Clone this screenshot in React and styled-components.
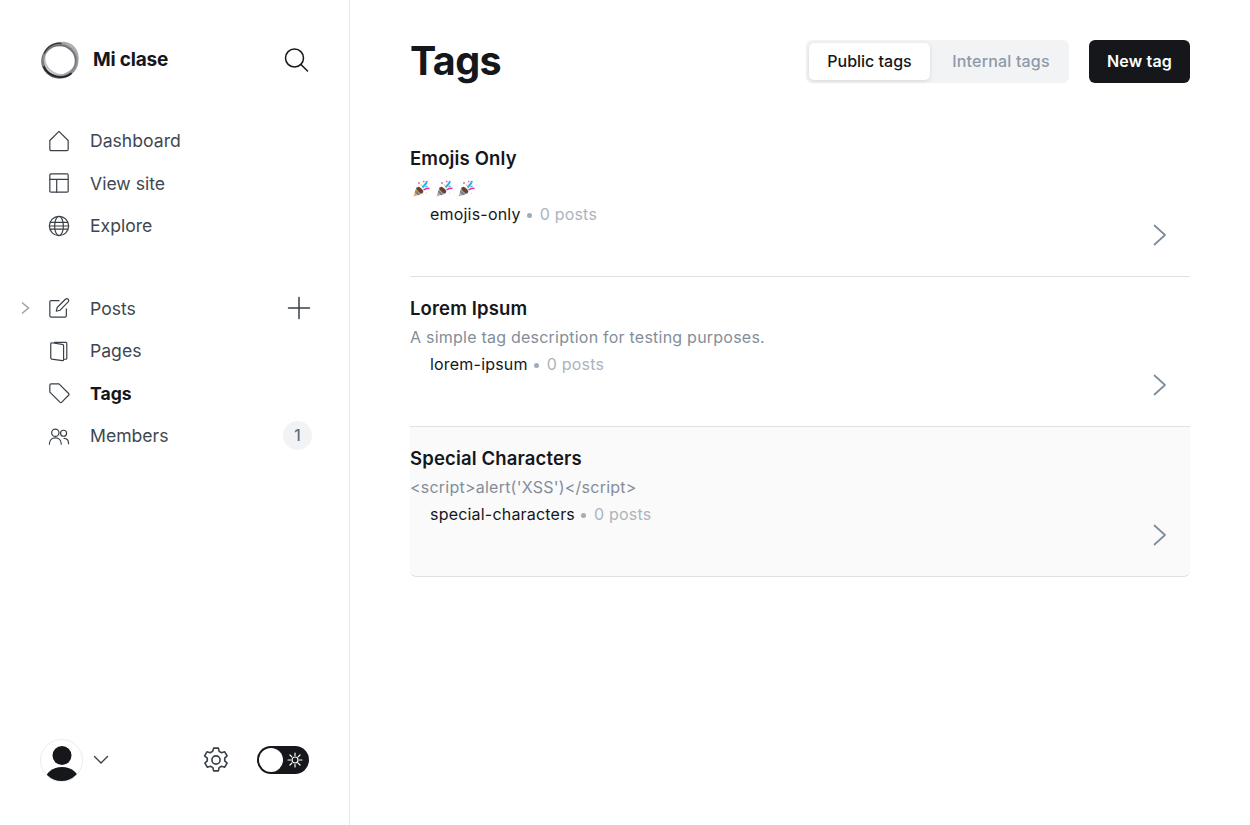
import React from "react";
import styled, { createGlobalStyle } from "styled-components";

const Global = createGlobalStyle`
  html, body { margin: 0; padding: 0; background: #fff; }
  body { font-family: Inter, "Liberation Sans", sans-serif; color: #15171a; }
  * { box-sizing: border-box; }
`;

const Shell = styled.div`
  display: flex;
  width: 1250px;
  height: 825px;
  overflow: hidden;
`;
const Sidebar = styled.aside`
  width: 350px;
  flex: none;
  height: 825px;
  border-right: 1px solid #e6e9eb;
  display: flex;
  flex-direction: column;
  padding: 40px 38px 44px 40px;
`;
const Brand = styled.div`
  display: flex;
  align-items: center;
  height: 40px;
  margin-bottom: 39.7px;
`;
const BrandName = styled.div`
  font-size: 19px;
  line-height: 38px;
  height: 38px;
  font-weight: 700;
  letter-spacing: -0.2px;
  margin-left: 13px;
  margin-top: -1px;
  flex: 1;
  color: #15171a;
`;
const SearchIcon = styled.span`
  display: flex;
  margin-right: 2px;
`;
const NavGroup = styled.nav`
  display: flex;
  flex-direction: column;
  margin-bottom: 40px;
`;
const NavRow = styled.div`
  position: relative;
  display: flex;
  align-items: center;
  height: 42.5px;
  padding-left: 8px;
  gap: 20px;
  font-size: 17.6px;
  font-weight: ${p => (p.$active ? 700 : 400)};
  color: ${p => (p.$active ? "#15171a" : "#3e4751")};
`;
const NavIcon = styled.span`
  width: 22px;
  height: 22px;
  flex: none;
  display: flex;
  color: #394047;
`;
const NavLabel = styled.span`
  flex: 1;
`;
const Caret = styled.span`
  position: absolute;
  left: -21px;
  top: 15px;
  display: flex;
  color: #9aa3ab;
`;
const PlusIcon = styled.span`
  display: flex;
  color: #394047;
`;
const Badge = styled.span`
  width: 29px;
  height: 29px;
  margin-right: -1px;
  border-radius: 50%;
  background: #f1f3f4;
  color: #5d6d85;
  font-size: 15.5px;
  font-weight: 500;
  display: flex;
  align-items: center;
  justify-content: center;
`;
const Footer = styled.div`
  margin-top: auto;
  display: flex;
  align-items: center;
  height: 42px;
`;
const Avatar = styled.div`
  width: 43px;
  height: 43px;
  border-radius: 50%;
  border: 1px solid #e9ebed;
  overflow: hidden;
  flex: none;
`;
const Chevron = styled.span`
  display: flex;
  margin-left: 10px;
  color: #394047;
`;
const Gear = styled.span`
  display: flex;
  margin-left: auto;
  margin-right: 27px;
  color: #394047;
`;
const Toggle = styled.div`
  width: 52px;
  height: 28px;
  margin-right: 2px;
  border-radius: 14px;
  background: #15171a;
  display: flex;
  align-items: center;
  justify-content: space-between;
  padding: 0 6px 0 2px;
`;
const Knob = styled.span`
  width: 24px;
  height: 24px;
  border-radius: 50%;
  background: #fff;
`;
const SunWrap = styled.span`
  display: flex;
  color: #fff;
`;
const Main = styled.main`
  flex: 1;
  padding: 40px 60px 0;
`;
const Header = styled.header`
  display: flex;
  align-items: center;
  height: 43px;
  margin-bottom: 44px;
`;
const Title = styled.h1`
  margin: 0;
  flex: 1;
  font-size: 39.5px;
  line-height: 42px;
  height: 43px;
  font-weight: 700;
  letter-spacing: -0.6px;
  color: #15171a;
`;
const Segments = styled.div`
  display: flex;
  height: 43px;
  padding: 3px;
  border-radius: 6px;
  background: #f1f3f4;
  margin-right: 20px;
`;
const Segment = styled.div`
  width: ${p => p.$w}px;
  display: flex;
  align-items: center;
  justify-content: center;
  padding-bottom: 1px;
  border-radius: 5px;
  font-size: 16px;
  font-weight: 500;
  letter-spacing: ${p => (p.$on ? 0 : "0.17px")};
  padding-left: ${p => (p.$on ? 0 : "6px")};
  background: ${p => (p.$on ? "#fff" : "transparent")};
  color: ${p => (p.$on ? "#15171a" : "#8e9aa8")};
  box-shadow: ${p => (p.$on ? "0 1px 4px rgba(0,0,0,.12)" : "none")};
`;
const Primary = styled.div`
  width: 101px;
  height: 43px;
  padding-bottom: 1px;
  border-radius: 6px;
  background: #15171a;
  color: #fff;
  font-size: 16px;
  letter-spacing: 0.2px;
  font-weight: 600;
  display: flex;
  align-items: center;
  justify-content: center;
`;
const List = styled.div`
  display: flex;
  flex-direction: column;
`;
const Row = styled.div`
  position: relative;
  height: 150px;
  padding-top: 19px;
  border-bottom: 1px solid #dfe2e5;
  background: ${p => (p.$hover ? "#fafafa" : "transparent")};
  border-radius: ${p => (p.$hover ? "0 0 6px 6px" : "0")};
`;
const RowTitle = styled.div`
  font-size: 18.5px;
  line-height: 24px;
  font-weight: 600;
  letter-spacing: 0.15px;
  color: #15171a;
`;
const RowDesc = styled.div`
  display: flex;
  align-items: center;
  height: 29px;
  margin-top: 2px;
  font-size: 16px;
  letter-spacing: 0.23px;
  color: #838e9a;
`;
const EmojiRow = styled.div`
  display: flex;
  gap: 5.5px;
  padding-left: 3px;
  margin-top: 3px;
`;
const RowMeta = styled.div`
  display: flex;
  align-items: center;
  padding-left: 20px;
  height: 24px;
  margin-top: 1px;
  font-size: 16px;
  letter-spacing: 0.2px;
  color: #15171a;
`;
const Dot = styled.span`
  width: 5px;
  height: 5px;
  border-radius: 50%;
  background: #a0acb8;
  margin: 2px 8px 0 6px;
`;
const Count = styled.span`
  color: #abb4be;
`;
const RowArrow = styled.span`
  position: absolute;
  right: 19px;
  top: 97px;
  display: flex;
  color: #7c8b9a;
`;

const Ic = ({ s = 22, w = 1.3, vb = 24, children }) => (
  <svg width={s} height={s} viewBox={`0 0 ${vb} ${vb}`} fill="none" stroke="currentColor" strokeWidth={w} strokeLinecap="round" strokeLinejoin="round">
    {children}
  </svg>
);

const Logo = () => (
  <svg width="40" height="40" viewBox="0 0 40 40" fill="none">
    <ellipse cx="19.500" cy="21" rx="16.800" ry="16.200" stroke="#55575a" strokeWidth="3" opacity=".85" />
    <ellipse cx="20.500" cy="19.500" rx="18" ry="15.800" stroke="#808285" strokeWidth="2.200" opacity=".65" transform="rotate(-35 20 20)" />
    <ellipse cx="20.500" cy="19" rx="17" ry="15.500" stroke="#a0a2a5" strokeWidth="2.200" opacity=".65" transform="rotate(30 20 20)" />
    <path d="M4 27C8.500 36.500 22 40.500 31 33.500" stroke="#232528" strokeWidth="1.900" strokeLinecap="round" />
    <path d="M4.500 13C7.500 6 15 2.500 21 3.500" stroke="#3a3c3f" strokeWidth="1.500" strokeLinecap="round" />
  </svg>
);

const Popper = () => (
  <svg width="17" height="17" viewBox="0 0 17 17" fill="none">
    <path d="M0.500 16.500L3.500 7L10 13.500Z" fill="#e8a93f" />
    <path d="M2.600 10L7 14.500L5 15.200L1.900 12.200Z" fill="#5c7fc4" />
    <path d="M3.300 7.800L8.800 13L7.500 13.800L2.900 9Z" fill="#5c7fc4" />
    <ellipse cx="7" cy="10" rx="2" ry="4" transform="rotate(-45 7 10)" fill="#6b4230" />
    <path d="M10 1.500H11.500M5 3H7" stroke="#f25fb0" strokeWidth="1.600" />
    <path d="M9.500 7.500L13 3.500L14 1" stroke="#25b4ee" strokeWidth="2" />
    <path d="M10.500 10C12.500 8.500 14.500 8 16.500 8.500" stroke="#ee2a9a" strokeWidth="1.500" />
    <path d="M12.500 7L14.500 6" stroke="#25b4ee" strokeWidth="1.200" />
    <path d="M8 4L8.500 6M13 13L14 13.500M9.500 2.500V3" stroke="#f2d16e" strokeWidth="1" />
  </svg>
);

const rows = [
  { title: "Emojis Only", emoji: true, slug: "emojis-only" },
  { title: "Lorem Ipsum", desc: "A simple tag description for testing purposes.", slug: "lorem-ipsum" },
  { title: "Special Characters", desc: "<script>alert('XSS')</script>", slug: "special-characters", hover: true },
];

export default function App() {
  return (
    <Shell>
      <Global />
      <Sidebar>
        <Brand>
          <Logo />
          <BrandName>Mi clase</BrandName>
          <SearchIcon>
            <Ic s={26} w={1.500} vb={26}>
              <circle cx="11.500" cy="11" r="9" />
              <path d="M18 17.500l6.500 6.500" />
            </Ic>
          </SearchIcon>
        </Brand>
        <NavGroup>
          <NavRow>
            <NavIcon><Ic><path d="M2 11.500L12 1.500l10 10v9.500a1.500 1.500 0 0 1-1.500 1.500h-17A1.500 1.500 0 0 1 2 21z" /></Ic></NavIcon>
            <NavLabel>Dashboard</NavLabel>
          </NavRow>
          <NavRow>
            <NavIcon><Ic><rect x="2" y="2" width="20" height="20" rx="1.200" /><path d="M2 8h20M9.500 8v14" /></Ic></NavIcon>
            <NavLabel>View site</NavLabel>
          </NavRow>
          <NavRow>
            <NavIcon><Ic><circle cx="12" cy="12" r="10.500" /><ellipse cx="12" cy="12" rx="4.800" ry="10.500" /><path d="M2.500 8h19M2.500 15.500h19M1.500 12h21" /></Ic></NavIcon>
            <NavLabel>Explore</NavLabel>
          </NavRow>
        </NavGroup>
        <NavGroup>
          <NavRow>
            <Caret><Ic s={12} w={1.600} vb={12}><path d="M3.500 1l6 5-6 5" /></Ic></Caret>
            <NavIcon><Ic><path d="M12 4H3.500A1.500 1.500 0 0 0 2 5.500v15A1.500 1.500 0 0 0 3.500 22h15a1.500 1.500 0 0 0 1.500-1.500V13" /><path d="M19 2.500a2 2 0 0 1 3 2.800L13 14.500l-4 1 1-4z" /></Ic></NavIcon>
            <NavLabel>Posts</NavLabel>
            <PlusIcon><Ic s={24} w={1.500} vb={24}><path d="M12 1.500v21M1.500 12h21" /></Ic></PlusIcon>
          </NavRow>
          <NavRow>
            <NavIcon><Ic><path d="M7 2.500h12.500a1 1 0 0 1 1 1V20a1 1 0 0 1-1 1H17" /><path d="M4 3l11.500 1.800a1.500 1.500 0 0 1 1.500 1.500V21.500a1 1 0 0 1-1.200 1L4 20.800A1.500 1.500 0 0 1 3 19.500V4a1 1 0 0 1 1-1z" /></Ic></NavIcon>
            <NavLabel>Pages</NavLabel>
          </NavRow>
          <NavRow $active>
            <NavIcon><Ic><path d="M2 3.500A1.500 1.500 0 0 1 3.500 2H12l10.500 10.500a1.500 1.500 0 0 1 0 2L15 22a1.500 1.500 0 0 1-2 0L2 11z" /></Ic></NavIcon>
            <NavLabel>Tags</NavLabel>
          </NavRow>
          <NavRow>
            <NavIcon><Ic><circle cx="8" cy="8.500" r="4" /><path d="M1.500 21c0-4 2.500-7 6.500-7s6.500 3 6.500 7" /><circle cx="17" cy="9" r="3.300" /><path d="M17.500 14.500c3 0 5 2.500 5 6" /></Ic></NavIcon>
            <NavLabel>Members</NavLabel>
            <Badge>1</Badge>
          </NavRow>
        </NavGroup>
        <Footer>
          <Avatar>
            <svg width="41" height="41" viewBox="0 0 41 41">
              <circle cx="21" cy="15.500" r="9.500" fill="#15171a" />
              <ellipse cx="21" cy="41" rx="17" ry="14" fill="#15171a" />
            </svg>
          </Avatar>
          <Chevron><Ic s={16} w={1.400} vb={16}><path d="M1.500 4.500L8 11l6.500-6.500" /></Ic></Chevron>
          <Gear>
            <Ic s={28} w={1.500} vb={26}>
              <circle cx="13" cy="13" r="3.800" />
              <path d="M10.800 2h4.400l.7 3 2.200 1.300 3-.9 2.200 3.800-2.200 2.100v2.500l2.200 2.100-2.200 3.800-3-.9-2.200 1.300-.7 3h-4.400l-.7-3-2.200-1.300-3 .9-2.200-3.800 2.200-2.100v-2.500L2.400 9.200l2.200-3.800 3 .9 2.200-1.300z" />
            </Ic>
          </Gear>
          <Toggle>
            <Knob />
            <SunWrap>
              <Ic s={16} w={1.200} vb={16}>
                <circle cx="8" cy="8" r="3" />
                <path d="M8 1v2.500M8 12.500V15M1 8h2.500M12.500 8H15M3 3l1.800 1.800M11.200 11.200L13 13M13 3l-1.800 1.800M4.800 11.200L3 13" />
              </Ic>
            </SunWrap>
          </Toggle>
        </Footer>
      </Sidebar>
      <Main>
        <Header>
          <Title>Tags</Title>
          <Segments>
            <Segment $on $w={121}>Public tags</Segment>
            <Segment $w={136}>Internal tags</Segment>
          </Segments>
          <Primary>New tag</Primary>
        </Header>
        <List>
          {rows.map(r => (
            <Row key={r.slug} $hover={r.hover}>
              <RowTitle>{r.title}</RowTitle>
              <RowDesc>
                {r.emoji ? (<EmojiRow><Popper /><Popper /><Popper /></EmojiRow>) : r.desc}
              </RowDesc>
              <RowMeta>
                {r.slug}
                <Dot />
                <Count>0 posts</Count>
              </RowMeta>
              <RowArrow>
                <Ic s={22} w={1.700} vb={22}><path d="M5.500 1.500l10.500 9.500-10.500 9.500" /></Ic>
              </RowArrow>
            </Row>
          ))}
        </List>
      </Main>
    </Shell>
  );
}
